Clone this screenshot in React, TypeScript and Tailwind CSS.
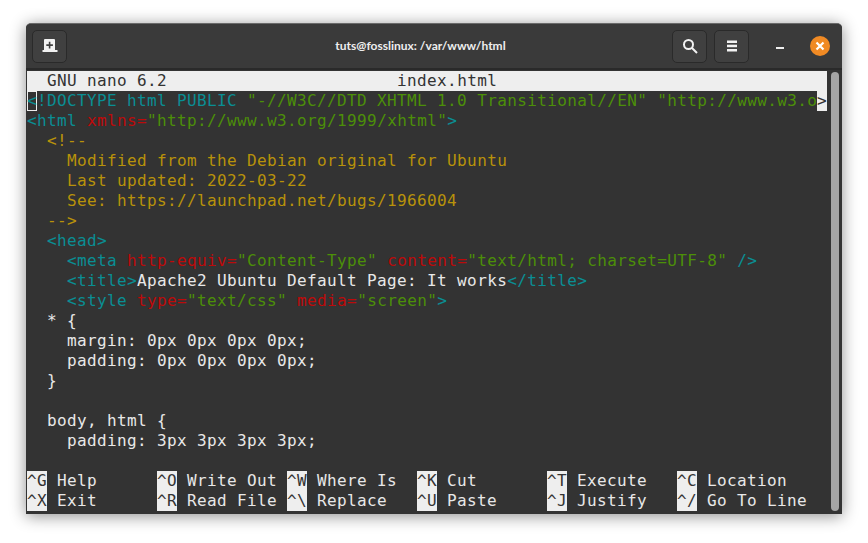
import React from 'react';

const T = 'text-[#0a8e93]'; // tag
const G = 'text-[#4c8f08]'; // string
const R = 'text-[#bd0a0a]'; // attribute
const Y = 'text-[#b8920a]'; // comment
const W = 'text-[#e8e8e8]';

type Seg = [string, string];

const lines: Seg[][] = [
    [['<html', T], [' ', W], ['xmlns=', R], ['"http://www.w3.org/1999/xhtml"', G], ['>', T]],
    [['  <!--', Y]],
    [['    Modified from the Debian original for Ubuntu', Y]],
    [['    Last updated: 2022-03-22', Y]],
    [['    See: https://launchpad.net/bugs/1966004', Y]],
    [['  -->', Y]],
    [['  <head>', T]],
    [['    <meta', T], [' ', W], ['http-equiv=', R], ['"Content-Type"', G], [' ', W], ['content=', R], ['"text/html; charset=UTF-8"', G], [' />', T]],
    [['    <title>', T], ['Apache2 Ubuntu Default Page: It works', W], ['</title>', T]],
    [['    <style', T], [' ', W], ['type=', R], ['"text/css"', G], [' ', W], ['media=', R], ['"screen"', G], ['>', T]],
    [['  * {', W]],
    [['    margin: 0px 0px 0px 0px;', W]],
    [['    padding: 0px 0px 0px 0px;', W]],
    [['  }', W]],
    [[' ', W]],
    [['  body, html {', W]],
    [['    padding: 3px 3px 3px 3px;', W]],
];

const shortcuts = [
    [['^G', 'Help'], ['^O', 'Write Out'], ['^W', 'Where Is'], ['^K', 'Cut'], ['^T', 'Execute'], ['^C', 'Location']],
    [['^X', 'Exit'], ['^R', 'Read File'], ['^\\', 'Replace'], ['^U', 'Paste'], ['^J', 'Justify'], ['^/', 'Go To Line']],
];

const HeaderButton: React.FC<{ children: React.ReactNode }> = ({ children }) => (
    <div className="w-[35px] h-[33px] rounded-[5px] bg-[#404040] border border-[#2a2a2a] flex items-center justify-center">
        {children}
    </div>
);

export default function App() {
    return (
        <div className="w-[868px] h-[543px] bg-white pt-[23px] pl-[26px] overflow-hidden">
            <div className="w-[816px] h-[491px] flex flex-col bg-[#333333] rounded-t-[5px] overflow-hidden border-t border-[#6a6a6a] shadow-[0_2px_16px_rgba(0,0,0,0.45)]">
                {/* Title bar */}
                <div className="h-[46px] shrink-0 bg-[#3a3a3a] border-b-2 border-[#2a2a2a] flex items-center pl-[6px] pr-[12px] font-['Lato',sans-serif]">
                    <HeaderButton>
                        <svg width="16" height="14" viewBox="0 0 16 14">
                            <path fill="#f2f2f2" fillRule="evenodd" d="M3 0h9a1 1 0 0 1 1 1v10h2.500v2H0.500v-2H2V1a1 1 0 0 1 1-1zM6.800 2.800v2.500H4.300v1.600h2.500v2.500h1.600V6.900h2.500V5.300H8.400V2.800z" />
                        </svg>
                    </HeaderButton>
                    <div className="flex-1 text-center text-[12px] font-bold text-[#eeeeee] pl-[102px]">tuts@fosslinux: /var/www/html</div>
                    <div className="flex items-center gap-[7px]">
                        <HeaderButton>
                            <svg width="16" height="16" viewBox="0 0 16 16" fill="none" stroke="#f2f2f2">
                                <circle cx="6.500" cy="6.500" r="4.500" strokeWidth="2" />
                                <path d="M10 10l5 5" strokeWidth="2" />
                            </svg>
                        </HeaderButton>
                        <HeaderButton>
                            <svg width="12" height="12" viewBox="0 0 12 12" fill="#f2f2f2">
                                <rect x="1" y="0.500" width="10" height="2.500" />
                                <rect x="1" y="4.700" width="10" height="2.500" />
                                <rect x="1" y="9" width="10" height="2.500" />
                            </svg>
                        </HeaderButton>
                    </div>
                    <div className="w-[8px] h-[2px] bg-[#eeeeee] ml-[27px] mt-[3px]" />
                    <div className="w-[20px] h-[20px] rounded-full bg-[#f08a24] ml-[26px] flex items-center justify-center">
                        <svg width="10" height="10" viewBox="0 0 10 10" stroke="#ffffff" strokeWidth="2.200">
                            <path d="M1.500 1.500l7 7M8.500 1.500l-7 7" />
                        </svg>
                    </div>
                </div>

                {/* Terminal */}
                <div className="flex-1 flex min-h-0 pl-[1px] font-['DejaVu_Sans_Mono',monospace] text-[16px] leading-[20px] tracking-[0.37px] whitespace-pre">
                    <div className="w-[800px] pt-[1px]">
                        <div className="h-[20px] bg-[#eeeeee] text-[#333333]">{'  GNU nano 6.2'.padEnd(37)}index.html</div>
                        <div className="h-[20px] flex">
                            <div className="flex-1 overflow-hidden flex">
                                <span className={`${T} inline-block w-[10px] h-[20px] border border-[#eeeeee]`}>
                                    <span className="block -ml-[1px] -mt-[1px]">{'<'}</span>
                                </span>
                                <span className={T}>!DOCTYPE html PUBLIC </span>
                                <span className={G}>"-//W3C//DTD XHTML 1.0 Transitional//EN" "http://www.w3.o</span>
                            </div>
                            <div className="w-[10px] bg-[#eeeeee] text-[#333333]">{'>'}</div>
                        </div>
                        {lines.map((line, i) => (
                            <div key={i} className="h-[20px]">
                                {line.map((seg, j) => (
                                    <span key={j} className={seg[1]}>{seg[0]}</span>
                                ))}
                            </div>
                        ))}
                        <div className="h-[20px]" />
                        {shortcuts.map((row, i) => (
                            <div key={i} className="h-[20px] flex">
                                {row.map(([key, label]) => (
                                    <div key={key} className="w-[130px] flex">
                                        <span className="bg-[#eeeeee] text-[#333333] w-[20px]">{key}</span>
                                        <span className={`${W} ml-[10px]`}>{label}</span>
                                    </div>
                                ))}
                            </div>
                        ))}
                    </div>
                    <div className="flex-1 flex justify-center pt-[2px] pb-[3px] pl-[1px]">
                        <div className="w-[8px] rounded-full bg-[#a5a5a5]" />
                    </div>
                </div>
            </div>
        </div>
    );
}
